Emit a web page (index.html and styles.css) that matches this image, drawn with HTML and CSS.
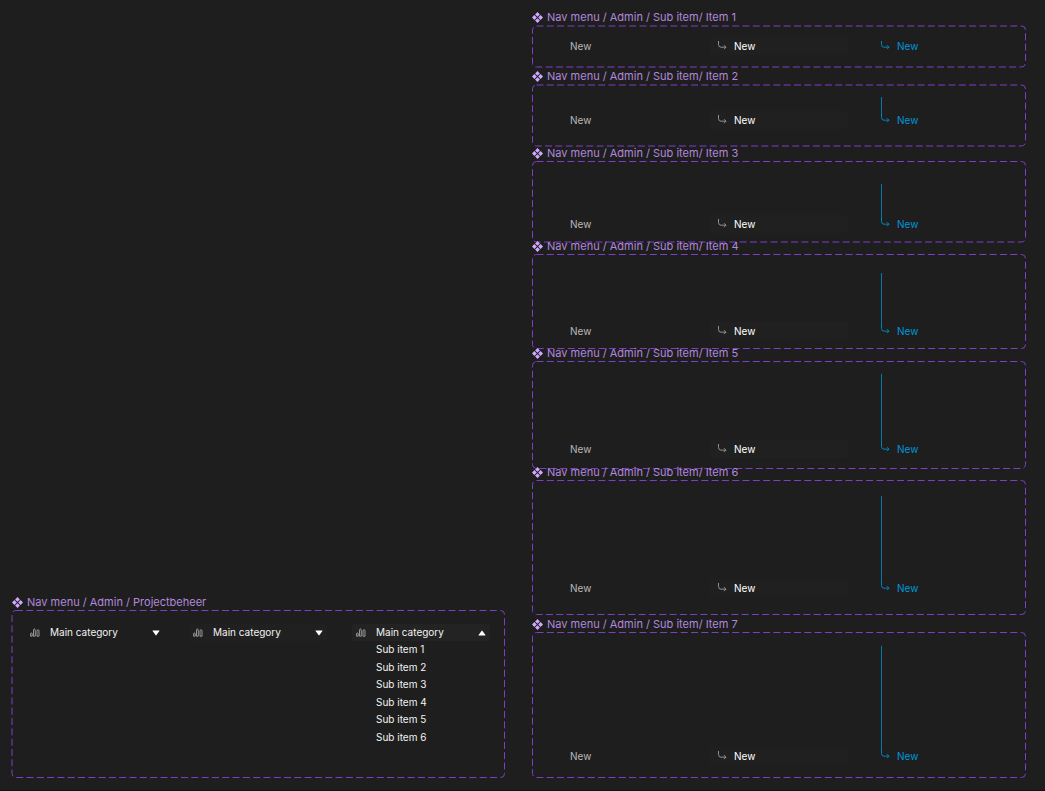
FILE: index.html
```
<!DOCTYPE html>
<html lang="en">
<head>
<meta charset="utf-8">
<title>Nav menu components</title>
<link rel="stylesheet" href="styles.css">
</head>
<body>
<svg class="defs" aria-hidden="true">
  <symbol id="component" viewBox="0 0 11 11"><path d="M5.5 0 7.9 2.4 5.5 4.8 3.1 2.4zM5.5 6.2 7.9 8.6 5.5 11 3.1 8.6zM2.4 3.1 4.8 5.5 2.4 7.9 0 5.5zM8.6 3.1 11 5.5 8.6 7.9 6.2 5.5z"/></symbol>
  <symbol id="arrow" viewBox="0 0 9 9"><path d="M.5 0V3.5Q.5 6.2 3 6.2H8M6 4.2 8 6.2 6 8.2"/></symbol>
  <symbol id="chart" viewBox="0 0 10 9"><path d="M.6 8.2V5.8Q.6 5 1.4 5T2.2 5.8V8.2zM3.5 8.2V3Q3.5 .8 4.4 .8T5.3 3V8.2zM7 8.2V2.8Q7 1.8 8 1.8T9 2.8V8.2z"/></symbol>
  <symbol id="caret" viewBox="0 0 8 6"><path d="M.9 .5H7.1Q7.9 .5 7.4 1.1L4.5 5.1Q4 5.7 3.5 5.1L.6 1.1Q.1 .5 .9 .5z"/></symbol>
</svg>
<main class="canvas">
  <section class="group group-menu">
    <h2 class="label"><svg class="component"><use href="#component"/></svg>Nav menu / Admin / Projectbeheer</h2>
    <div class="frame frame-menu">
      <svg class="outline soft-left"><rect rx="4"/></svg>
      <button class="category"><svg class="chart"><use href="#chart"/></svg><span>Main category</span><svg class="caret"><use href="#caret"/></svg></button>
      <button class="category hover"><svg class="chart"><use href="#chart"/></svg><span>Main category</span><svg class="caret"><use href="#caret"/></svg></button>
      <div class="menu">
        <button class="category open"><svg class="chart"><use href="#chart"/></svg><span>Main category</span><svg class="caret"><use href="#caret"/></svg></button>
        <ul class="submenu">
          <li><a href="#">Sub item 1</a></li>
          <li><a href="#">Sub item 2</a></li>
          <li><a href="#">Sub item 3</a></li>
          <li><a href="#">Sub item 4</a></li>
          <li><a href="#">Sub item 5</a></li>
          <li><a href="#">Sub item 6</a></li>
        </ul>
      </div>
    </div>
  </section>
  <div class="stack">
    <section class="group">
      <h2 class="label"><svg class="component"><use href="#component"/></svg>Nav menu / Admin / Sub item/ Item 1</h2>
      <div class="frame item-1">
        <svg class="outline soft"><rect rx="4"/></svg>
        <a href="#" class="item"><span>New</span></a>
        <a href="#" class="item hover"><span class="branch"><svg class="arrow"><use href="#arrow"/></svg></span><span>New</span></a>
        <a href="#" class="item active"><span class="branch"><svg class="arrow"><use href="#arrow"/></svg></span><span>New</span></a>
      </div>
    </section>
    <section class="group">
      <h2 class="label"><svg class="component"><use href="#component"/></svg>Nav menu / Admin / Sub item/ Item 2</h2>
      <div class="frame item-2">
        <svg class="outline soft"><rect rx="4"/></svg>
        <a href="#" class="item"><span>New</span></a>
        <a href="#" class="item hover"><span class="branch"><svg class="arrow"><use href="#arrow"/></svg></span><span>New</span></a>
        <a href="#" class="item active"><span class="branch"><svg class="arrow"><use href="#arrow"/></svg></span><span>New</span></a>
      </div>
    </section>
    <section class="group">
      <h2 class="label"><svg class="component"><use href="#component"/></svg>Nav menu / Admin / Sub item/ Item 3</h2>
      <div class="frame item-3">
        <svg class="outline soft-bottom"><rect rx="4"/></svg>
        <a href="#" class="item"><span>New</span></a>
        <a href="#" class="item hover"><span class="branch"><svg class="arrow"><use href="#arrow"/></svg></span><span>New</span></a>
        <a href="#" class="item active"><span class="branch"><svg class="arrow"><use href="#arrow"/></svg></span><span>New</span></a>
      </div>
    </section>
    <section class="group">
      <h2 class="label"><svg class="component"><use href="#component"/></svg>Nav menu / Admin / Sub item/ Item 4</h2>
      <div class="frame item-4">
        <svg class="outline"><rect rx="4"/></svg>
        <a href="#" class="item"><span>New</span></a>
        <a href="#" class="item hover"><span class="branch"><svg class="arrow"><use href="#arrow"/></svg></span><span>New</span></a>
        <a href="#" class="item active"><span class="branch"><svg class="arrow"><use href="#arrow"/></svg></span><span>New</span></a>
      </div>
    </section>
    <section class="group">
      <h2 class="label"><svg class="component"><use href="#component"/></svg>Nav menu / Admin / Sub item/ Item 5</h2>
      <div class="frame item-5">
        <svg class="outline"><rect rx="4"/></svg>
        <a href="#" class="item"><span>New</span></a>
        <a href="#" class="item hover"><span class="branch"><svg class="arrow"><use href="#arrow"/></svg></span><span>New</span></a>
        <a href="#" class="item active"><span class="branch"><svg class="arrow"><use href="#arrow"/></svg></span><span>New</span></a>
      </div>
    </section>
    <section class="group">
      <h2 class="label"><svg class="component"><use href="#component"/></svg>Nav menu / Admin / Sub item/ Item 6</h2>
      <div class="frame item-6">
        <svg class="outline"><rect rx="4"/></svg>
        <a href="#" class="item"><span>New</span></a>
        <a href="#" class="item hover"><span class="branch"><svg class="arrow"><use href="#arrow"/></svg></span><span>New</span></a>
        <a href="#" class="item active"><span class="branch"><svg class="arrow"><use href="#arrow"/></svg></span><span>New</span></a>
      </div>
    </section>
    <section class="group">
      <h2 class="label"><svg class="component"><use href="#component"/></svg>Nav menu / Admin / Sub item/ Item 7</h2>
      <div class="frame item-7">
        <svg class="outline"><rect rx="4"/></svg>
        <a href="#" class="item"><span>New</span></a>
        <a href="#" class="item hover"><span class="branch"><svg class="arrow"><use href="#arrow"/></svg></span><span>New</span></a>
        <a href="#" class="item active"><span class="branch"><svg class="arrow"><use href="#arrow"/></svg></span><span>New</span></a>
      </div>
    </section>
  </div>
</main>
</body>
</html>
```
FILE: styles.css
```
* { box-sizing: border-box; }
body {
  margin: 0;
  background: #1e1e1e;
  color: #f2f2f2;
  font: 10px/17px Inter, "Liberation Sans", sans-serif;
}
a { color: inherit; text-decoration: none; }
.defs { position: absolute; width: 0; height: 0; }

.canvas {
  display: grid;
  grid-template-columns: 1fr 1fr;
  column-gap: 27px;
  padding: 14px 19px 12px 11px;
  border-bottom: 1px solid #121212;
}
.group-menu { align-self: end; }

.label {
  position: relative;
  z-index: 1;
  display: flex;
  align-items: center;
  gap: 4px;
  height: 6px;
  margin: 0 0 5px;
  font-size: 11px;
  font-weight: 400;
  line-height: 6px;
  white-space: nowrap;
  color: #b288dc;
}
.group-menu .label { padding-left: 1px; }
.component { width: 11px; height: 11px; fill: #d1a8ff; flex: none; }

.frame {
  position: relative;
  display: grid;
  grid-template-columns: repeat(3, 1fr);
  column-gap: 25px;
  align-items: end;
  padding: 12px 15px;
}
.outline { position: absolute; inset: 0; width: 100%; height: 100%; pointer-events: none; }
.outline rect {
  x: 0.5px;
  y: 0.5px;
  width: calc(100% - 1px);
  height: calc(100% - 1px);
  fill: none;
  stroke: #7b3fc4;
  stroke-dasharray: 7 3.3;
}
.outline.soft rect { y: 1px; height: calc(100% - 2px); }
.outline.soft-bottom rect { height: calc(100% - 1.5px); }
.outline.soft-left rect { x: 1px; width: calc(100% - 1.5px); }

.frame-menu { min-height: 168px; align-items: start; padding-top: 14px; }
.category {
  display: flex;
  align-items: center;
  width: 100%;
  height: 17px;
  padding: 0 4px;
  border: 0;
  border-radius: 2px;
  background: none;
  color: inherit;
  font: inherit;
  text-align: left;
}
.category span { flex: 1; padding-left: 10px; }
.category.hover { background: #202020; }
.category.open { background: #232323; }
.chart { width: 10px; height: 9px; fill: none; stroke: #b4b4b4; stroke-width: 0.8; }
.caret { width: 8px; height: 6px; fill: #fff; }
.open .caret { rotate: 180deg; }
.submenu {
  display: grid;
  grid-auto-rows: 1fr;
  align-items: center;
  height: 105px;
  margin: 0;
  padding: 0 0 0 24px;
  list-style: none;
}

.item {
  display: flex;
  align-items: flex-end;
  gap: 7px;
  padding-left: 8px;
  border-radius: 2px;
  line-height: 18px;
  color: #b8b8b8;
}
.item > span:only-child { padding-left: 15px; }
.item.hover { background: #202020; color: #fff; }
.item.active { align-self: stretch; color: #0096d6; }
.branch {
  display: flex;
  flex-direction: column;
  justify-content: flex-end;
  align-self: stretch;
  padding-bottom: 6px;
}
.hover .branch { padding-bottom: 5px; }
.arrow { width: 9px; height: 9px; fill: none; stroke: #909090; }
.active .arrow { stroke: #0085be; }
.active .branch::before { content: ""; flex: 1; width: 1px; background: #0578ab; }

.item-1 { height: 43px; padding-bottom: 13px; }
.item-1 .branch { padding-bottom: 5px; }
.item-1 .branch::before { display: none; }
.item-2 { height: 63px; padding-top: 13px; padding-bottom: 18px; }
.item-3 { height: 82px; padding-top: 23px; padding-bottom: 10px; }
.item-4 { height: 95px; padding-top: 19px; padding-bottom: 9px; }
.item-5 { height: 108px; padding-top: 13px; padding-bottom: 11px; }
.item-6 { height: 135px; padding-top: 16px; padding-bottom: 18px; }
.item-7 { height: 146px; padding-top: 14px; padding-bottom: 13px; }
.group:has(.item-1) { margin-bottom: 5px; }
.group:has(.item-2) { margin-bottom: 3px; }
.group:has(.item-4) { margin-bottom: 1px; }
.group:has(.item-6) { margin-bottom: 6px; }
```
